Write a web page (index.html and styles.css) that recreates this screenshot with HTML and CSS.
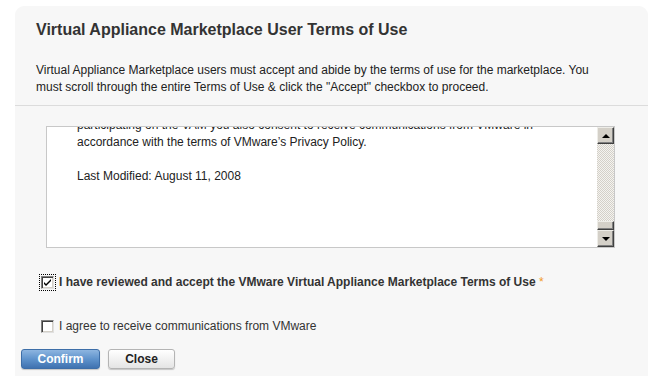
FILE: index.html
```html
<!DOCTYPE html>
<html lang="en">
  <head>
    <meta charset="UTF-8" />
    <meta name="viewport" content="width=device-width, initial-scale=1.0" />
    <title>Terms of Use - Virtual Appliance Marketplace</title>
    <link rel="stylesheet" href="styles.css">
  </head>
  <body>
    <div class="panel">
      <div class="header">
        <h1>Virtual Appliance Marketplace User Terms of Use</h1>
        <p class="intro">
          Virtual Appliance Marketplace users must accept and abide by the terms of use for the marketplace. You<br>
          must scroll through the entire Terms of Use &amp; click the "Accept" checkbox to proceed.
        </p>
      </div>
      <div class="content">
        <div class="terms">
          <div class="terms-text">
            <p class="cut">
              participating on the VAM you also consent to receive communications from VMware in
              accordance with the terms of VMware’s Privacy Policy.
            </p>
            <p>Last Modified: August 11, 2008</p>
          </div>
          <div class="scrollbar">
            <div class="sb-btn"><span class="arrow up"></span></div>
            <div class="sb-track"></div>
            <div class="sb-thumb"></div>
            <div class="sb-btn"><span class="arrow down"></span></div>
          </div>
        </div>
        <div class="check-row accept">
          <span class="box checked focused">
            <svg width="9" height="9" viewBox="0 0 9 9">
              <path d="M1 4 L3 6 L8 1 L8 3 L3 8 L1 6 Z" fill="#000" />
            </svg>
          </span>
          <span class="label strong">I have reviewed and accept the VMware Virtual Appliance Marketplace Terms of Use <span class="req">*</span></span>
        </div>
        <div class="check-row">
          <span class="box"></span>
          <span class="label">I agree to receive communications from VMware</span>
        </div>
      </div>
      <div class="buttons">
        <button class="btn primary">Confirm</button>
        <button class="btn">Close</button>
      </div>
    </div>
  </body>
</html>
```

FILE: styles.css
```css
body {
  margin: 0;
  background: #fff;
  font-family: "Liberation Sans", Arial, sans-serif;
  color: #333;
}
.panel {
  margin: 6px 7px 0 15px;
  height: 370px;
  background: #f7f7f7;
  border-radius: 9px 9px 0 0;
}
.header {
  padding: 14px 21px 9px;
  border-bottom: 1px solid #dcdcdc;
}
h1 {
  margin: 0;
  font-size: 16px;
  line-height: 20px;
  font-weight: bold;
  color: #333;
}
.intro {
  margin: 22px 0 0;
  font-size: 12px;
  line-height: 17px;
  color: #222;
}
.content {
  padding: 20px 33px 0 31px;
}
.terms {
  display: flex;
  height: 120px;
  background: #fff;
  border: 1px solid #c8c8c8;
}
.terms-text {
  flex: 1;
  overflow: hidden;
  padding: 0 30px;
  font-size: 12px;
  line-height: 17px;
  color: #222;
}
.terms-text p {
  margin: 0 0 17px;
}
.terms-text .cut {
  margin-top: -10px;
}
.scrollbar {
  width: 17px;
  display: flex;
  flex-direction: column;
}
.sb-btn,
.sb-thumb {
  box-sizing: border-box;
  background: #d4d0c8;
  border: 1px solid;
  border-color: #eeede8 #404040 #404040 #eeede8;
  box-shadow: inset -1px -1px 0 #808080;
}
.sb-btn {
  height: 17px;
  display: flex;
  align-items: center;
  justify-content: center;
}
.sb-thumb {
  height: 9px;
}
.sb-track {
  flex: 1;
  background-color: #f4f3f0;
  background-image: repeating-conic-gradient(#d4d0c8 0 25%, #f4f3f0 0 50%);
  background-size: 2px 2px;
}
.arrow {
  width: 0;
  height: 0;
  border-left: 4px solid transparent;
  border-right: 4px solid transparent;
}
.arrow.up {
  border-bottom: 4px solid #000;
}
.arrow.down {
  border-top: 4px solid #000;
}
.check-row {
  display: flex;
  align-items: center;
  gap: 5px;
  margin-left: -5px;
  font-size: 12px;
  line-height: 14px;
  margin-top: 30px;
}
.check-row.accept {
  margin-top: 27px;
}
.box {
  box-sizing: border-box;
  width: 13px;
  height: 13px;
  background: #fff;
  border: 1px solid;
  border-color: #808080 #e0e0e0 #e0e0e0 #808080;
  box-shadow: inset 1px 1px 0 #404040, inset -1px -1px 0 #d4d0c8;
  display: flex;
  align-items: center;
  justify-content: center;
}
.box.focused {
  outline: 1px dotted #000;
  outline-offset: 1px;
}
.label {
  color: #333;
}
.label.strong {
  font-weight: bold;
}
.req {
  color: #f29a1f;
  font-weight: normal;
}
.buttons {
  display: flex;
  gap: 8px;
  margin-top: 16px;
  padding-left: 6px;
}
.btn {
  height: 20px;
  padding: 0;
  width: 67px;
  font-family: "Liberation Sans", Arial, sans-serif;
  font-size: 12px;
  font-weight: bold;
  color: #222;
  background: linear-gradient(#ffffff, #e4e4e4);
  border: 1px solid #b4b4b4;
  border-radius: 3px;
  box-shadow: 0 1px 1px rgba(0, 0, 0, 0.2);
  cursor: pointer;
}
.btn.primary {
  width: 79px;
  color: #fff;
  background: linear-gradient(#8db5e0, #5f93cc 50%, #3f72b0);
  border-color: #3d6ea8;
}
```
